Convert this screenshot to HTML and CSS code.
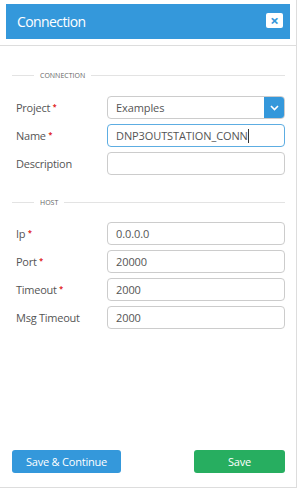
FILE: index.html
```html
<!DOCTYPE html>
<html lang="en">
<head>
    <meta charset="UTF-8">
    <meta name="viewport" content="width=device-width, initial-scale=1.0">
    <title>Connection</title>
    <link rel="stylesheet" href="styles.css">
</head>
<body>
    <div class="dialog">
        <!-- Header -->
        <div class="dialog-head">
            <div class="title-bar">
                <span class="title">Connection</span>
                <span class="close">&times;</span>
            </div>
        </div>

        <div class="dialog-body">
            <div class="legend"><span>Connection</span></div>

            <div class="row">
                <label>Project <i class="req">*</i></label>
                <div class="select">
                    <span class="select-text">Examples</span>
                    <span class="select-btn">
                        <svg width="9" height="6" viewBox="0 0 9 6"><path d="M1 1l3.5 3.5L8 1" fill="none" stroke="#fff" stroke-width="1.6"/></svg>
                    </span>
                </div>
            </div>
            <div class="row">
                <label>Name <i class="req">*</i></label>
                <div class="field focus">DNP3OUTSTATION_CONN<span class="caret"></span></div>
            </div>
            <div class="row">
                <label>Description</label>
                <div class="field"></div>
            </div>

            <div class="legend host"><span>Host</span></div>

            <div class="row">
                <label>Ip <i class="req">*</i></label>
                <div class="field">0.0.0.0</div>
            </div>
            <div class="row">
                <label>Port <i class="req">*</i></label>
                <div class="field">20000</div>
            </div>
            <div class="row">
                <label>Timeout <i class="req">*</i></label>
                <div class="field">2000</div>
            </div>
            <div class="row">
                <label>Msg Timeout</label>
                <div class="field">2000</div>
            </div>

            <div class="actions">
                <button class="btn btn-blue">Save &amp; Continue</button>
                <button class="btn btn-green">Save</button>
            </div>
        </div>
    </div>
</body>
</html>
```

FILE: styles.css
```css
body {
    margin: 0;
    background-color: #fff;
    font-family: "Open Sans", "Noto Sans", sans-serif;
    color: #555;
}

.dialog {
    width: 296px;
    height: 487px;
    border-right: 1px solid #ddd;
    border-bottom: 1px solid #ddd;
    display: flex;
    flex-direction: column;
}

/* Header */
.dialog-head {
    padding: 4px 6px 6px 6px;
    border-bottom: 1px solid #ddd;
}

.title-bar {
    height: 35px;
    background-color: #3498db;
    display: flex;
    align-items: center;
    justify-content: space-between;
    padding: 0 7px 0 11px;
}

.title {
    color: #fff;
    font-size: 14px;
    letter-spacing: -0.6px;
}

.close {
    width: 17px;
    height: 15px;
    background-color: #fff;
    border-radius: 2px;
    color: #3498db;
    font-size: 15px;
    font-weight: bold;
    line-height: 15px;
    text-align: center;
    margin-top: -3px;
}

/* Body */
.dialog-body {
    flex: 1;
    display: flex;
    flex-direction: column;
    padding: 25px 11px 14px 12px;
}

.legend {
    display: flex;
    align-items: center;
    font-size: 7px;
    text-transform: uppercase;
    color: #666;
    margin-bottom: 16px;
}

.legend::before {
    content: "";
    width: 22px;
    border-top: 1px solid #e3e3e3;
    margin-right: 6px;
}

.legend::after {
    content: "";
    flex: 1;
    border-top: 1px solid #e3e3e3;
    margin-left: 6px;
}

.legend.host {
    margin-top: 18px;
    margin-bottom: 15px;
}

.row {
    display: flex;
    align-items: center;
    height: 23px;
    margin-bottom: 5px;
}

.row label {
    width: 91px;
    padding-left: 4px;
    font-size: 11px;
    letter-spacing: -0.25px;
    color: #555;
}

.req {
    color: #e02020;
    font-style: normal;
    font-weight: bold;
    font-size: 7px;
    vertical-align: 3px;
}

.field, .select {
    flex: 1;
    height: 21px;
    border: 1px solid #ccc;
    border-radius: 4px;
    font-size: 11px;
    letter-spacing: -0.1px;
    line-height: 21px;
    padding-left: 8px;
    color: #555;
    display: flex;
    align-items: center;
}

.field.focus {
    border-color: #5dade2;
}

.caret {
    width: 1px;
    height: 14px;
    background-color: #333;
}

.select {
    padding-left: 0;
    overflow: hidden;
}

.select-text {
    flex: 1;
    padding-left: 8px;
}

.select-btn {
    width: 21px;
    height: 23px;
    margin-right: -1px;
    background-color: #3498db;
    display: flex;
    align-items: center;
    justify-content: center;
}

/* Buttons */
.actions {
    margin-top: auto;
    display: flex;
    justify-content: space-between;
}

.btn {
    height: 23px;
    border: none;
    border-radius: 3px;
    color: #fff;
    font-family: "Open Sans", "Noto Sans", sans-serif;
    font-size: 11px;
    letter-spacing: -0.2px;
    padding: 0;
    cursor: pointer;
}

.btn-blue {
    width: 109px;
    background-color: #3498db;
}

.btn-green {
    width: 91px;
    background-color: #27ae60;
}
```
